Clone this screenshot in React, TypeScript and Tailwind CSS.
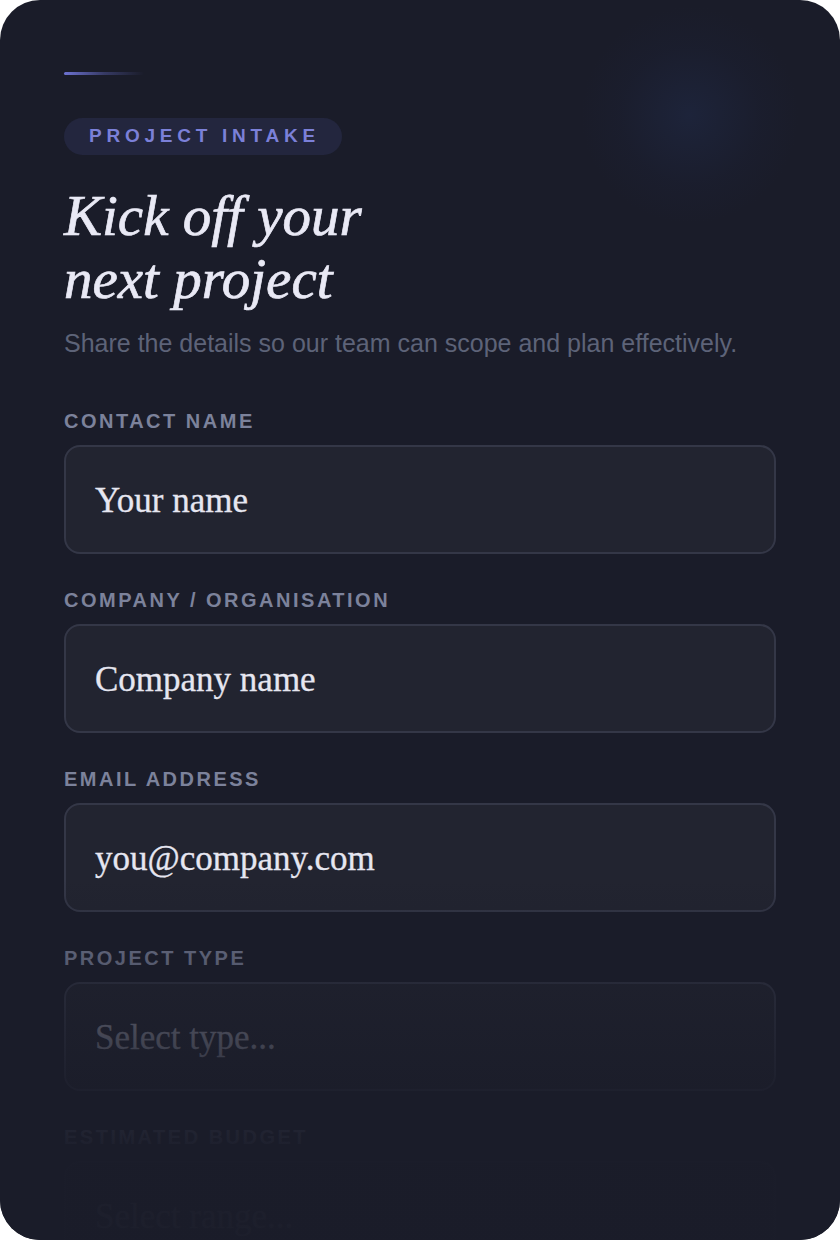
import React from "react";

const fields = [
  { label: "CONTACT NAME", placeholder: "Your name", bright: true },
  { label: "COMPANY / ORGANISATION", placeholder: "Company name", bright: true },
  { label: "EMAIL ADDRESS", placeholder: "you@company.com", bright: true },
  { label: "PROJECT TYPE", placeholder: "Select type...", bright: false },
  { label: "ESTIMATED BUDGET", placeholder: "Select range...", bright: false },
];

export default function App() {
  return (
    <div className="w-[840px] h-[1240px] bg-white">
      <div className="relative w-[840px] h-[1240px] overflow-hidden rounded-[40px] bg-[#1a1c29]">
        {/* glow */}
        <div className="pointer-events-none absolute left-[580px] top-[5px] h-[220px] w-[220px] rounded-full bg-[radial-gradient(circle,rgba(35,50,90,0.35)_0%,rgba(30,40,75,0.12)_45%,transparent_70%)]" />

        <div className="relative flex flex-col px-16 pt-[72px]">
          <div className="h-[3px] w-[80px] rounded-full bg-gradient-to-r from-[#6d72d2] via-[#4a4f8e]/60 to-transparent" />

          <div className="mt-[43px] flex">
            <div className="flex h-[37px] items-center rounded-full bg-[#23263e] pl-[25px] pr-[22px]">
              <span
                className="text-[19px] font-bold tracking-[0.25em] text-[#7b80d8]"
                style={{ fontFamily: '"Liberation Sans", Arial, sans-serif' }}
              >
                PROJECT INTAKE
              </span>
            </div>
          </div>

          <h1
            className="mt-[29px] text-[57px] italic leading-[63px] text-[#e9e9f5] [-webkit-text-stroke:0.7px_#e9e9f5]"
            style={{ fontFamily: '"Liberation Serif", "Times New Roman", serif' }}
          >
            Kick off your
            <br />
            next project
          </h1>

          <p
            className="mt-[17px] text-[25px] leading-[32px] text-[#5d6378]"
            style={{ fontFamily: '"Liberation Sans", Arial, sans-serif' }}
          >
            Share the details so our team can scope and plan effectively.
          </p>

          <div className="mt-[50px] flex flex-col gap-[34px]">
            {fields.map((f) => (
              <div key={f.label} className="flex flex-col gap-[12px]">
                <label
                  className="text-[20px] font-bold leading-[24px] tracking-[2.5px] text-[#7c829b]"
                  style={{ fontFamily: '"Liberation Sans", Arial, sans-serif' }}
                >
                  {f.label}
                </label>
                <div className="flex h-[109px] items-center rounded-2xl border-2 border-[#343747] bg-[#222430] pl-[29px] pt-[3px]">
                  <span
                    className={
                      "text-[35px] [-webkit-text-stroke:0.3px_currentColor] " +
                      (f.bright ? "text-[#e6e6f0]" : "text-[#9a9cab]")
                    }
                    style={{ fontFamily: '"Liberation Serif", "Times New Roman", serif' }}
                  >
                    {f.placeholder}
                  </span>
                </div>
              </div>
            ))}
          </div>
        </div>

        {/* bottom fade */}
        <div className="pointer-events-none absolute left-0 right-0 top-[880px] bottom-0 bg-[linear-gradient(to_bottom,rgba(26,28,41,0)_0%,rgba(26,28,41,0.5)_30%,rgba(26,28,41,0.82)_55%,rgba(26,28,41,0.97)_75%,rgba(26,28,41,0.98)_100%)]" />
      </div>
    </div>
  );
}
